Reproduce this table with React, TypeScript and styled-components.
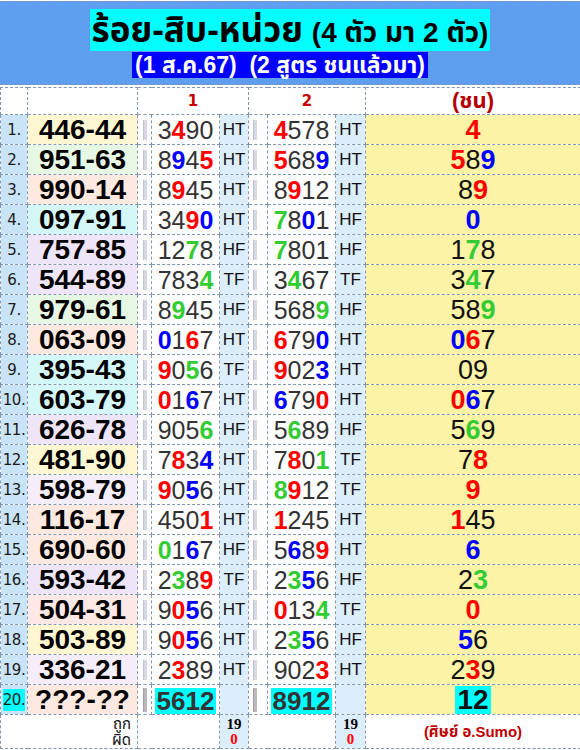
import React from "react";
import styled, { createGlobalStyle } from "styled-components";

const GlobalStyle = createGlobalStyle`
  html, body { margin: 0; padding: 0; background: #ffffff; }
  body { font-family: "Liberation Sans", "Noto Sans Thai", "Noto Sans", sans-serif; }
`;

const BORDER = "1px dashed #8497b0";

const Page = styled.div`
  width: 580px;
  padding-top: 1px;
`;

const Header = styled.header`
  box-sizing: border-box;
  height: 84px;
  background: #5e9eee;
  border-top: ${BORDER};
  border-bottom: ${BORDER};
  display: flex;
  flex-direction: column;
  align-items: center;
  padding-top: 7px;
`;

const Title = styled.h1`
  margin: 0;
  background: #00ffff;
  color: #000;
  font-weight: bold;
  height: 42px;
  line-height: 42px;
  padding: 0 2px;
  white-space: nowrap;
  font-family: "Liberation Sans", "Noto Sans Thai", sans-serif;
`;

const TitleBig = styled.span`
  font-size: 35px;
`;

const TitleSmall = styled.span`
  font-size: 28px;
`;

const Subtitle = styled.h2`
  margin: 1px 20px 0 0;
  background: #0000ff;
  color: #ffffff;
  font-size: 23px;
  font-weight: bold;
  height: 26px;
  line-height: 26px;
  padding: 0 3px;
  white-space: pre;
`;

const Table = styled.table`
  margin-top: 2px;
  width: 580px;
  border-collapse: collapse;
  table-layout: fixed;
  td {
    border: ${BORDER};
    padding: 0;
    line-height: 26px;
    overflow: hidden;
  }
`;

const Row = styled.tr<{ $h?: number }>`
  height: ${(p) => p.$h ?? 30}px;
`;

const HeadCell = styled.td<{ $big?: boolean }>`
  text-align: center;
  color: ${(p) => (p.$big ? "#b40000" : "#c80000")};
  font-weight: bold;
  font-size: ${(p) => (p.$big ? 22 : 15)}px;
  font-family: ${(p) => (p.$big ? '"Liberation Sans", "Noto Sans Thai", sans-serif' : '"DejaVu Sans", sans-serif')};
  background: #ffffff;
`;

const IdxCell = styled.td`
  background: #cae4f7;
  text-align: center;
  font-family: "DejaVu Sans", sans-serif;
  font-size: 15px;
  color: #1a1a1a;
  letter-spacing: -0.5px;
`;

const IdxMark = styled.span`
  background: #00ffff;
  line-height: 22px;
  display: inline-block;
`;

const NAME_BG: Record<string, string> = {
  y: "#fff7d2",
  g: "#e6f8e4",
  p: "#fde9e0",
  c: "#d4f7f8",
  l: "#efe5f8",
  l2: "#f5eefa",
  p2: "#fde8e6",
};

const NameCell = styled.td<{ $bg: string }>`
  background: ${(p) => NAME_BG[p.$bg]};
  text-align: center;
  font-weight: bold;
  font-size: 28px;
  color: #000;
  font-family: "Liberation Sans", sans-serif;
`;

const SepCell = styled.td<{ $pad: number }>`
  background: #ffffff;
  padding-left: ${(p) => p.$pad}px !important;
  vertical-align: middle;
`;

const SepBar = styled.span<{ $dark?: boolean }>`
  display: block;
  width: 3px;
  height: ${(p) => (p.$dark ? 24 : 20)}px;
  background: ${(p) => (p.$dark ? "#b9b9bd" : "#d6d8e2")};
  border-left: 1px solid ${(p) => (p.$dark ? "#a0a0a6" : "#bfc3d2")};
`;

const DigitCell = styled.td`
  background: #ffffff;
  text-align: center;
  font-size: 25px;
  color: #333333;
  font-family: "Liberation Sans", sans-serif;
`;

const COLORS: Record<string, string> = {
  r: "#ff0000",
  b: "#0000ff",
  g: "#33cc33",
};

const Dg = styled.span<{ $c: string }>`
  color: ${(p) => COLORS[p.$c] ?? "inherit"};
  font-weight: ${(p) => (COLORS[p.$c] ? "bold" : "normal")};
`;

const Highlight = styled.span<{ $size: number }>`
  display: inline-block;
  vertical-align: middle;
  background: #00ffff;
  font-weight: bold;
  font-size: ${(p) => p.$size}px;
  line-height: ${(p) => p.$size}px;
  padding: 0 2px;
`;

const TagCell = styled.td`
  background: #dcedfb;
  text-align: center;
  font-size: 17px;
  color: #111;
  font-family: "Liberation Sans", sans-serif;
`;

const ResultCell = styled.td`
  background: #fcf3a6;
  text-align: center;
  font-size: 27px;
  color: #111;
  font-family: "Liberation Sans", sans-serif;
`;

const FootLabelCell = styled.td`
  background: #fff;
  text-align: right;
  padding-right: 6px !important;
  font-size: 15px;
  color: #111;
  font-family: "Liberation Sans", "Noto Sans Thai", sans-serif;
  && { line-height: 16px; }
`;

const BlankCell = styled.td`
  background: #fff;
`;

const ScoreCell = styled.td`
  background: #dcedfb;
  text-align: center;
  font-family: "Liberation Serif", serif;
  font-weight: bold;
  font-size: 15px;
  color: #000;
  && { line-height: 15px; }
`;

const ScoreBad = styled.div`
  color: #ff0000;
`;

const CreditCell = styled.td`
  background: #fff;
  text-align: center;
  color: #c00000;
  font-weight: bold;
  font-size: 15px;
  font-family: "Liberation Sans", "Noto Sans Thai", sans-serif;
`;

type RowData = {
  n: string;
  bg: string;
  d1: string;
  c1: string;
  t1: string;
  d2: string;
  c2: string;
  t2: string;
  r: string;
  cr: string;
};

const rows: RowData[] = [
  { n: "446-44", bg: "y", d1: "3490", c1: ".r..", t1: "HT", d2: "4578", c2: "r...", t2: "HT", r: "4", cr: "r" },
  { n: "951-63", bg: "g", d1: "8945", c1: ".b.r", t1: "HT", d2: "5689", c2: "r..b", t2: "HT", r: "589", cr: "r.b" },
  { n: "990-14", bg: "p", d1: "8945", c1: ".r..", t1: "HT", d2: "8912", c2: ".r..", t2: "HT", r: "89", cr: ".r" },
  { n: "097-91", bg: "c", d1: "3490", c1: "..rb", t1: "HT", d2: "7801", c2: "g.b.", t2: "HF", r: "0", cr: "b" },
  { n: "757-85", bg: "l", d1: "1278", c1: "..g.", t1: "HF", d2: "7801", c2: "g...", t2: "HF", r: "178", cr: ".g." },
  { n: "544-89", bg: "l", d1: "7834", c1: "...g", t1: "TF", d2: "3467", c2: ".g..", t2: "TF", r: "347", cr: ".g." },
  { n: "979-61", bg: "g", d1: "8945", c1: ".g..", t1: "HF", d2: "5689", c2: "...g", t2: "HF", r: "589", cr: "..g" },
  { n: "063-09", bg: "p", d1: "0167", c1: "b.r.", t1: "HT", d2: "6790", c2: "r..b", t2: "HT", r: "067", cr: "br." },
  { n: "395-43", bg: "c", d1: "9056", c1: "r.g.", t1: "TF", d2: "9023", c2: "r..b", t2: "HT", r: "09", cr: ".." },
  { n: "603-79", bg: "c", d1: "0167", c1: "r.b.", t1: "HT", d2: "6790", c2: "b..r", t2: "HT", r: "067", cr: "rb." },
  { n: "626-78", bg: "l", d1: "9056", c1: "...g", t1: "HF", d2: "5689", c2: ".g..", t2: "HF", r: "569", cr: ".g." },
  { n: "481-90", bg: "y", d1: "7834", c1: ".r.b", t1: "HT", d2: "7801", c2: ".r.g", t2: "TF", r: "78", cr: ".r" },
  { n: "598-79", bg: "l2", d1: "9056", c1: "r.b.", t1: "HT", d2: "8912", c2: "gr..", t2: "TF", r: "9", cr: "r" },
  { n: "116-17", bg: "p", d1: "4501", c1: "...r", t1: "HT", d2: "1245", c2: "r...", t2: "HT", r: "145", cr: "r.." },
  { n: "690-60", bg: "p", d1: "0167", c1: "g.b.", t1: "HF", d2: "5689", c2: ".b.r", t2: "HT", r: "6", cr: "b" },
  { n: "593-42", bg: "l", d1: "2389", c1: ".g.r", t1: "TF", d2: "2356", c2: ".gb.", t2: "HF", r: "23", cr: ".g" },
  { n: "504-31", bg: "p2", d1: "9056", c1: ".rb.", t1: "HT", d2: "0134", c2: "r..g", t2: "TF", r: "0", cr: "r" },
  { n: "503-89", bg: "y", d1: "9056", c1: ".rb.", t1: "HT", d2: "2356", c2: ".gb.", t2: "HF", r: "56", cr: "b." },
  { n: "336-21", bg: "l2", d1: "2389", c1: ".r..", t1: "HT", d2: "9023", c2: "...r", t2: "HT", r: "239", cr: ".r." },
];

const Digits = ({ d, c }: { d: string; c: string }) => (
  <>
    {d.split("").map((ch, i) => (
      <Dg key={i} $c={c[i]}>
        {ch}
      </Dg>
    ))}
  </>
);

export default function App() {
  return (
    <Page>
      <GlobalStyle />
      <Header>
        <Title>
          <TitleBig>ร้อย-สิบ-หน่วย</TitleBig> <TitleSmall>(4 ตัว มา 2 ตัว)</TitleSmall>
        </Title>
        <Subtitle>{"(1 ส.ค.67)  (2 สูตร ชนแล้วมา)"}</Subtitle>
      </Header>
      <Table>
        <colgroup>
          <col style={{ width: 27 }} />
          <col style={{ width: 110 }} />
          <col style={{ width: 14 }} />
          <col style={{ width: 68 }} />
          <col style={{ width: 29 }} />
          <col style={{ width: 19 }} />
          <col style={{ width: 68 }} />
          <col style={{ width: 30 }} />
          <col style={{ width: 215 }} />
        </colgroup>
        <tbody>
          <Row $h={27}>
            <HeadCell />
            <HeadCell />
            <HeadCell colSpan={3}>1</HeadCell>
            <HeadCell colSpan={3}>2</HeadCell>
            <HeadCell $big>(ชน)</HeadCell>
          </Row>
          {rows.map((r, i) => (
            <Row key={i}>
              <IdxCell>{i + 1}.</IdxCell>
              <NameCell $bg={r.bg}>{r.n}</NameCell>
              <SepCell $pad={5}>
                <SepBar />
              </SepCell>
              <DigitCell>
                <Digits d={r.d1} c={r.c1} />
              </DigitCell>
              <TagCell>{r.t1}</TagCell>
              <SepCell $pad={4}>
                <SepBar />
              </SepCell>
              <DigitCell>
                <Digits d={r.d2} c={r.c2} />
              </DigitCell>
              <TagCell>{r.t2}</TagCell>
              <ResultCell>
                <Digits d={r.r} c={r.cr} />
              </ResultCell>
            </Row>
          ))}
          <Row>
            <IdxCell>
              <IdxMark>20.</IdxMark>
            </IdxCell>
            <NameCell $bg="p">???-??</NameCell>
            <SepCell $pad={5}>
              <SepBar $dark />
            </SepCell>
            <DigitCell>
              <Highlight $size={26}>5612</Highlight>
            </DigitCell>
            <TagCell />
            <SepCell $pad={4}>
              <SepBar $dark />
            </SepCell>
            <DigitCell>
              <Highlight $size={26}>8912</Highlight>
            </DigitCell>
            <TagCell />
            <ResultCell>
              <Highlight $size={28}>12</Highlight>
            </ResultCell>
          </Row>
          <Row $h={34}>
            <FootLabelCell colSpan={2}>
              <div>ถูก</div>
              <div>ผิด</div>
            </FootLabelCell>
            <BlankCell colSpan={2} />
            <ScoreCell>
              <div>19</div>
              <ScoreBad>0</ScoreBad>
            </ScoreCell>
            <BlankCell colSpan={2} />
            <ScoreCell>
              <div>19</div>
              <ScoreBad>0</ScoreBad>
            </ScoreCell>
            <CreditCell>(ศิษย์ อ.Sumo)</CreditCell>
          </Row>
        </tbody>
      </Table>
    </Page>
  );
}
